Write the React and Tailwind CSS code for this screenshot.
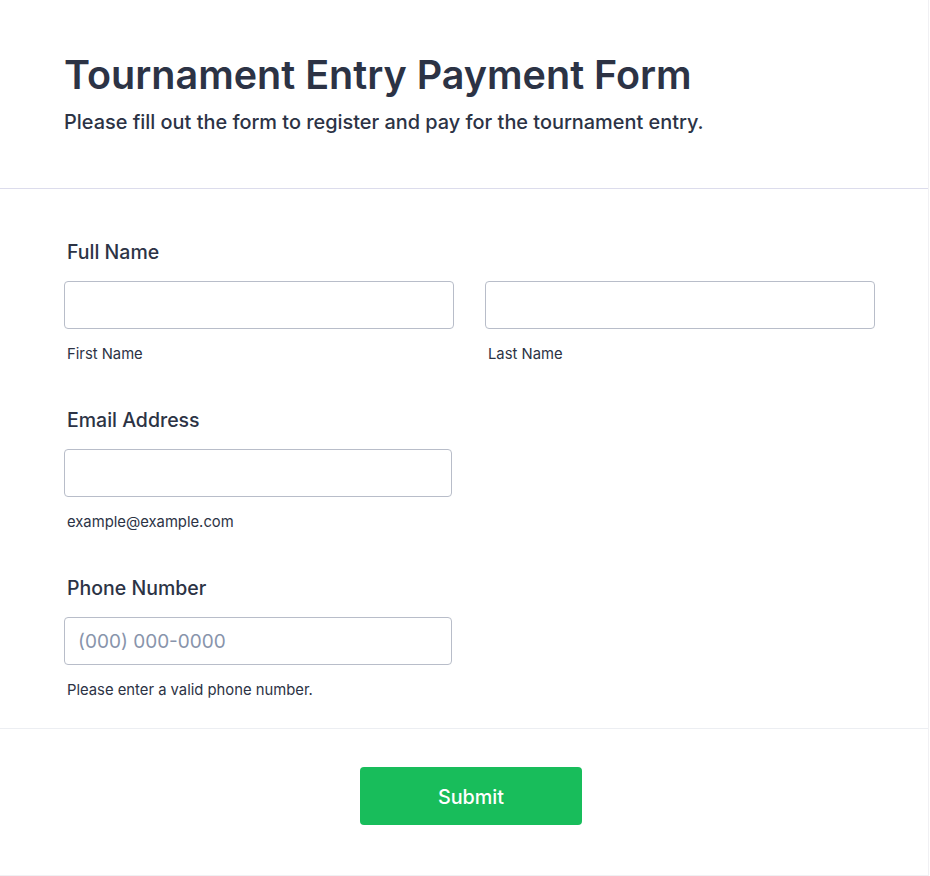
import React from "react";

const Field = ({ label, sublabel, placeholder }) => (
  <div className="flex flex-col">
    <label className="text-[19.5px] font-medium text-[#2c3345] leading-[28px] pl-[3px]">
      {label}
    </label>
    <input
      type="text"
      placeholder={placeholder}
      className="mt-[15px] h-[48px] w-[388px] rounded-[4px] border border-[#b8bdc9] bg-white px-[13px] text-[19px] text-[#2c3345] placeholder:text-[#8894ab] outline-none"
    />
    <span className="mt-[15px] pl-[3px] text-[14.8px] leading-[20px] text-[#2c3345]">
      {sublabel}
    </span>
  </div>
);

const App = () => {
  return (
    <div className="min-h-[876px] w-[929px] border-r border-b border-[#f0f0f3] bg-white font-['Inter',sans-serif]">
      {/* Header */}
      <div className="border-b border-[#dcdcec] px-16 pt-[51px] pb-[52px]">
        <h1 className="text-[39.5px] font-semibold leading-[48px] text-[#2c3345]">
          Tournament Entry Payment Form
        </h1>
        <p className="mt-[9px] text-[19.9px] font-medium leading-[28px] text-[#2c3345]">
          Please fill out the form to register and pay for the tournament entry.
        </p>
      </div>

      {/* Fields */}
      <div className="flex flex-col gap-[42px] px-16 pt-[49px] pb-[28px]">
        <div className="flex flex-col">
          <label className="text-[19.5px] font-medium text-[#2c3345] leading-[28px] pl-[3px]">
            Full Name
          </label>
          <div className="mt-[15px] flex gap-[31px]">
            <div className="flex flex-col">
              <input
                type="text"
                className="h-[48px] w-[390px] rounded-[4px] border border-[#b8bdc9] bg-white px-[13px] text-[19px] outline-none"
              />
              <span className="mt-[15px] pl-[3px] text-[14.8px] leading-[20px] text-[#2c3345]">
                First Name
              </span>
            </div>
            <div className="flex flex-col">
              <input
                type="text"
                className="h-[48px] w-[390px] rounded-[4px] border border-[#b8bdc9] bg-white px-[13px] text-[19px] outline-none"
              />
              <span className="mt-[15px] pl-[3px] text-[14.8px] leading-[20px] text-[#2c3345]">
                Last Name
              </span>
            </div>
          </div>
        </div>
        <Field label="Email Address" sublabel="example@example.com" />
        <Field
          label="Phone Number"
          sublabel="Please enter a valid phone number."
          placeholder="(000) 000-0000"
        />
      </div>

      {/* Footer */}
      <div className="flex justify-center border-t border-[#eceef2] pt-[38px] pb-[50px]">
        <button className="ml-[14px] h-[58px] w-[222px] rounded-[4px] bg-[#18bd5b] pt-[3px] text-[19.8px] font-medium text-white">
          Submit
        </button>
      </div>
    </div>
  );
};

export default App;
